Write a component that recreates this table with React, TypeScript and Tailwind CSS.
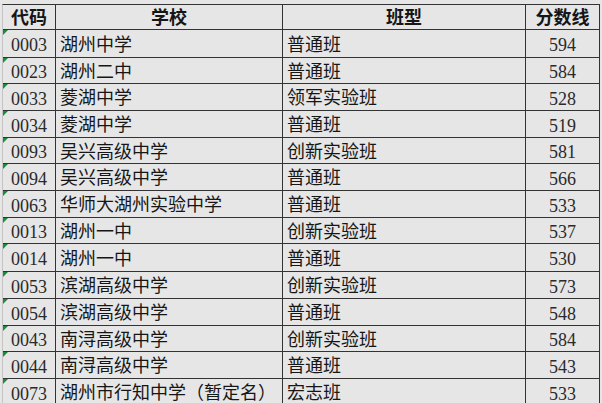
import React from "react";

const rows: { code: string; school: string; cls: string; score: string; h: number }[] = [
  { code: "0003", school: "湖州中学", cls: "普通班", score: "594", h: 28 },
  { code: "0023", school: "湖州二中", cls: "普通班", score: "584", h: 26 },
  { code: "0033", school: "菱湖中学", cls: "领军实验班", score: "528", h: 27 },
  { code: "0034", school: "菱湖中学", cls: "普通班", score: "519", h: 27 },
  { code: "0093", school: "吴兴高级中学", cls: "创新实验班", score: "581", h: 26 },
  { code: "0094", school: "吴兴高级中学", cls: "普通班", score: "566", h: 27 },
  { code: "0063", school: "华师大湖州实验中学", cls: "普通班", score: "533", h: 27 },
  { code: "0013", school: "湖州一中", cls: "创新实验班", score: "537", h: 26 },
  { code: "0014", school: "湖州一中", cls: "普通班", score: "530", h: 28 },
  { code: "0053", school: "滨湖高级中学", cls: "创新实验班", score: "573", h: 27 },
  { code: "0054", school: "滨湖高级中学", cls: "普通班", score: "548", h: 27 },
  { code: "0043", school: "南浔高级中学", cls: "创新实验班", score: "584", h: 26 },
  { code: "0044", school: "南浔高级中学", cls: "普通班", score: "543", h: 27 },
  { code: "0073", school: "湖州市行知中学（暂定名）", cls: "宏志班", score: "533", h: 27 },
];

const font = { fontFamily: "'Liberation Serif', 'Noto Sans CJK SC', serif" };

export default function App() {
  return (
    <div className="w-[602px] h-[403px] overflow-hidden bg-[#e6e6e6] pt-[4px] pl-[2px]">
      <div
        className="w-[598px] border-t border-t-[#333] border-l border-l-[#c4c4c4] text-[18px] text-[#161616] leading-none"
        style={{ fontFamily: "'Liberation Serif', 'Noto Sans CJK SC', serif" }}
      >
        <div className="flex h-[25px] border-b border-b-[#333] font-bold">
          <div className="w-[53px] border-r border-r-[#333] flex items-center justify-center pt-[2px]">代码</div>
          <div className="w-[227px] border-r border-r-[#333] flex items-center justify-center pt-[2px]">学校</div>
          <div className="w-[243px] border-r border-r-[#333] flex items-center justify-center pt-[2px]">班型</div>
          <div className="w-[74px] border-r border-r-[#333] flex items-center justify-center pt-[2px]">分数线</div>
        </div>
        {rows.map((r) => (
          <div key={r.code} className="flex border-b border-b-[#333]" style={{ height: r.h }}>
            <div className="relative w-[53px] border-r border-r-[#333] flex items-center justify-center pt-[3px] text-[#2a2a2a]">
              <span className="absolute left-0 top-0 w-0 h-0 border-t-[5px] border-r-[5px] border-t-[#1d8a3c] border-r-transparent" />
              {r.code}
            </div>
            <div className="w-[227px] border-r border-r-[#333] flex items-center pl-[4px] pt-[2px]">{r.school}</div>
            <div className="w-[243px] border-r border-r-[#333] flex items-center pl-[4px] pt-[2px]">{r.cls}</div>
            <div className="w-[74px] border-r border-r-[#333] flex items-center justify-center pt-[3px] text-[#2a2a2a]">{r.score}</div>
          </div>
        ))}
      </div>
    </div>
  );
}
